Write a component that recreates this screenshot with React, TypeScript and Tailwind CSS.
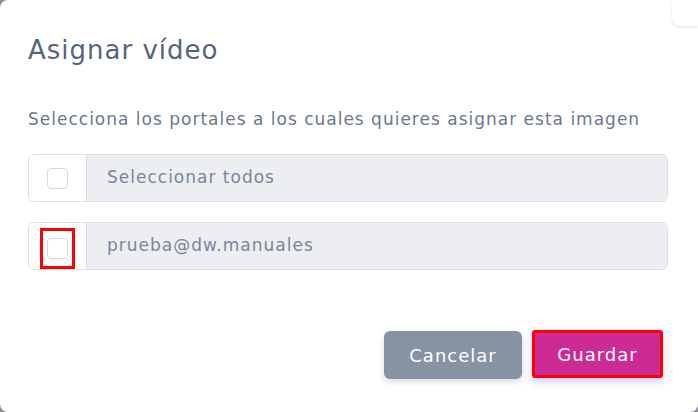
import React from "react";

function Row({ label, highlight }: { label: string; highlight?: boolean }) {
  return (
    <div className="flex h-[48px] rounded-[6px] border border-[#dcdfe5] overflow-hidden">
      <div className="w-[58px] shrink-0 flex items-center justify-center bg-white border-r border-[#dcdfe5]">
        {highlight ? (
          <div className="w-[35px] h-[41px] mt-[5px] flex items-center justify-center border-[3px] border-[#ff0000]">
            <div className="w-[21px] h-[21px] rounded-[4px] border border-[#d5d9df] bg-white" />
          </div>
        ) : (
          <div className="w-[21px] h-[21px] rounded-[4px] border border-[#d5d9df] bg-white" />
        )}
      </div>
      <div className="flex-1 flex items-center bg-[#eceef2] pl-[20px] text-[17px] tracking-[1px] text-[#7b8599]">
        {label}
      </div>
    </div>
  );
}

export default function App() {
  return (
    <div
      className="w-[698px] h-[412px] bg-[#8a8f98] overflow-hidden"
      style={{ fontFamily: '"DejaVu Sans", sans-serif' }}
    >
      <div className="relative w-full h-full bg-white rounded-[8px] pl-[28px] pr-[30px] pt-[34px]">
        <div className="absolute top-0 right-0 w-[26px] h-[26px] bg-white rounded-bl-[8px] shadow-[0_1px_3px_rgba(0,0,0,0.12)]" />
        <h2 className="text-[26px] leading-[32px] tracking-[1px] text-[#56657f]">Asignar vídeo</h2>
        <p className="mt-[41px] text-[17px] leading-[24px] tracking-[1px] text-[#6c7890] whitespace-nowrap">
          Selecciona los portales a los cuales quieres asignar esta imagen
        </p>
        <div className="mt-[23px] flex flex-col gap-[20px]">
          <Row label="Seleccionar todos" />
          <Row label="prueba@dw.manuales" highlight />
        </div>
        <div className="mt-[60px] flex justify-end items-start gap-[10px] pr-[5px]">
          <button className="w-[138px] h-[48px] mt-[1px] rounded-[6px] bg-[#8792a2] text-white text-[18px] tracking-[1px] shadow-[0_3px_6px_rgba(0,0,0,0.15)]">
            Cancelar
          </button>
          <button className="w-[131px] h-[48px] rounded-[3px] bg-[#cc2a94] border-[3px] border-[#ff0000] text-white text-[18px] tracking-[1px] shadow-[0_4px_8px_rgba(99,102,241,0.3)]">
            Guardar
          </button>
        </div>
      </div>
    </div>
  );
}
